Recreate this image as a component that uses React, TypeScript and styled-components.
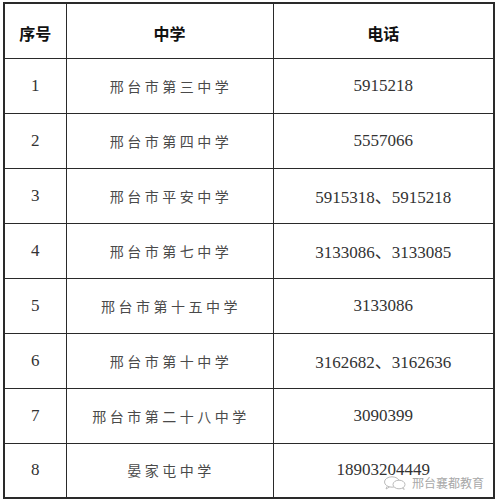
import styled, { createGlobalStyle } from 'styled-components';

interface School {
  no: number;
  name: string;
  phone: string;
}

const schools: School[] = [
  { no: 1, name: '邢台市第三中学', phone: '5915218' },
  { no: 2, name: '邢台市第四中学', phone: '5557066' },
  { no: 3, name: '邢台市平安中学', phone: '5915318、5915218' },
  { no: 4, name: '邢台市第七中学', phone: '3133086、3133085' },
  { no: 5, name: '邢台市第十五中学', phone: '3133086' },
  { no: 6, name: '邢台市第十中学', phone: '3162682、3162636' },
  { no: 7, name: '邢台市第二十八中学', phone: '3090399' },
  { no: 8, name: '晏家屯中学', phone: '18903204449' }
];

const App = () => {
  return (
    <>
      <GlobalStyle />
      <StyledPage>
        <StyledTable>
          <colgroup>
            <col style={{ width: 62 }} />
            <col style={{ width: 207 }} />
            <col style={{ width: 221 }} />
          </colgroup>
          <thead>
            <tr>
              <StyledHead>序号</StyledHead>
              <StyledHead>中学</StyledHead>
              <StyledHead>电话</StyledHead>
            </tr>
          </thead>
          <tbody>
            {schools.map(school => (
              <tr key={school.no}>
                <StyledNumberCell>{school.no}</StyledNumberCell>
                <StyledNameCell>{school.name}</StyledNameCell>
                <StyledNumberCell>{school.phone}</StyledNumberCell>
              </tr>
            ))}
          </tbody>
        </StyledTable>

        <StyledWatermark>
          <WechatIcon />
          <span>邢台襄都教育</span>
        </StyledWatermark>
      </StyledPage>
    </>
  );
};

export default App;

const WechatIcon = () => (
  <svg width="25" height="14" viewBox="0 0 25 14" fill="none">
    <ellipse cx="9" cy="6" rx="7.5" ry="5.2" stroke="#bbb" strokeWidth="1" />
    <path d="M4 10.5 L3 13 L6.5 11" stroke="#bbb" strokeWidth="1" />
    <ellipse cx="16" cy="8.5" rx="6" ry="4.3" fill="#fff" stroke="#bbb" strokeWidth="1" />
    <path d="M19.5 12 L21 13.6 L20.5 11.4" stroke="#bbb" strokeWidth="1" />
  </svg>
);

const GlobalStyle = createGlobalStyle`
  html, body {
    margin: 0;
    padding: 0;
    background: #fff;
  }
`;

const StyledPage = styled.div`
  position: relative;
  width: 500px;
  height: 504px;
  padding: 2px 0 0 3px;
  box-sizing: border-box;
  background: #fff;
  overflow: hidden;
`;

const StyledTable = styled.table`
  width: 490px;
  border-collapse: collapse;
  table-layout: fixed;
  border: 2px solid #2a2a2a;

  tr {
    height: 55px;
  }
`;

const StyledCell = styled.td`
  border: 1.5px solid #2a2a2a;
  text-align: center;
  vertical-align: middle;
  padding: 0;
`;

const StyledHead = styled(StyledCell).attrs({ as: 'th' })`
  font-family: 'Noto Sans CJK SC', sans-serif;
  font-weight: 700;
  font-size: 16px;
  color: #111;
  padding-top: 4px;
`;

const StyledNameCell = styled(StyledCell)`
  font-family: 'Noto Sans CJK SC', sans-serif;
  font-size: 14px;
  letter-spacing: 3.5px;
  color: #4a4a4a;
  text-indent: 3px;
`;

const StyledNumberCell = styled(StyledCell)`
  font-family: 'Liberation Serif', 'Noto Sans CJK SC', serif;
  font-size: 17px;
  color: #333;
`;

const StyledWatermark = styled.div`
  position: absolute;
  left: 383px;
  top: 474px;
  display: flex;
  align-items: center;
  gap: 4px;
  font-family: 'Noto Sans CJK SC', sans-serif;
  font-size: 12px;
  color: #a8a8a8;
  text-shadow: 0 0 2px rgba(255, 255, 255, 0.9);
`;
